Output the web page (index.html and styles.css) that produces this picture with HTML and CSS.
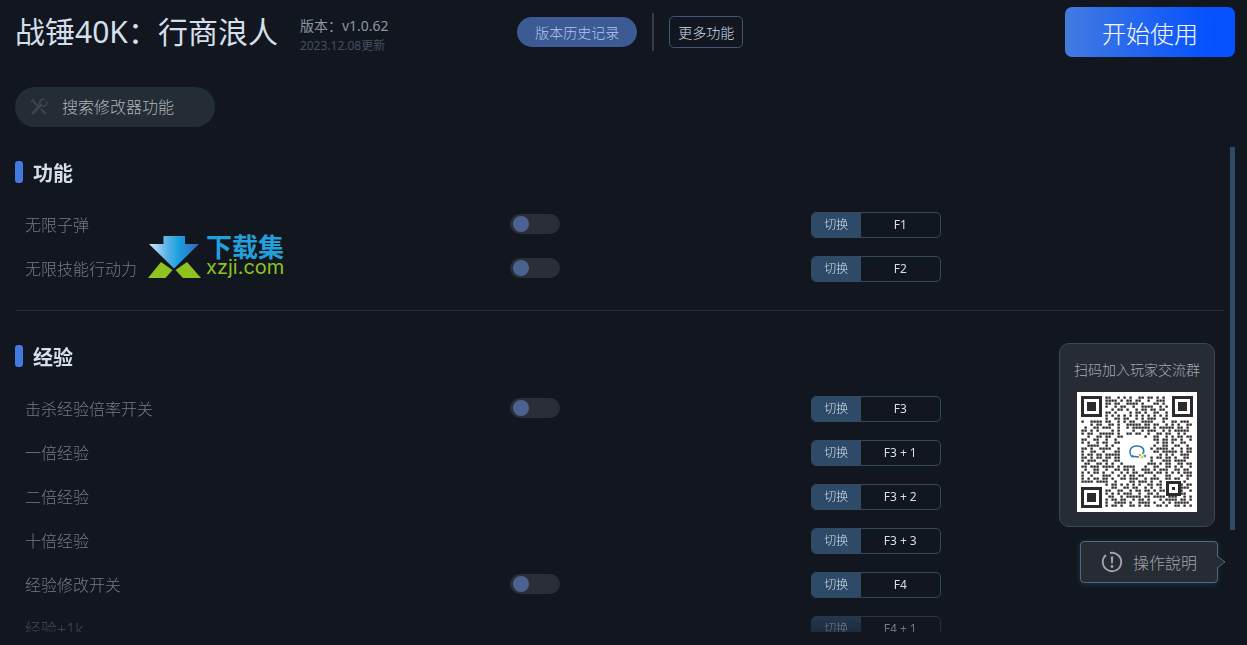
FILE: index.html
```html
<!DOCTYPE html>
<html lang="zh-CN">
<head>
    <meta charset="UTF-8">
    <meta name="viewport" content="width=device-width, initial-scale=1.0">
    <title>战锤40K：行商浪人</title>
    <link rel="stylesheet" href="styles.css">
</head>
<body>
    <header class="header">
        <div class="game">
            <h1>战锤40K：行商浪人</h1>
            <div class="version">
                <p class="version-number">版本：v1.0.62</p>
                <p class="version-date">2023.12.08更新</p>
            </div>
        </div>
        <div class="actions">
            <button type="button" class="btn-history">版本历史记录</button>
            <span class="separator"></span>
            <button type="button" class="btn-more">更多功能</button>
            <button type="button" class="btn-start">开始使用</button>
        </div>
    </header>

    <form class="search" role="search">
        <svg class="search-icon" viewBox="0 0 18 18" aria-hidden="true">
            <path d="M3 3l6.500 6.500M11 11l5 5" stroke-width="2.200"/>
            <path d="M2 16l9-9" stroke-width="2.600"/>
            <path d="M16.500 3.500a3.300 3.300 0 0 1-5.500 3.500a3.300 3.300 0 0 1 3.500-5.500" stroke-width="1.800"/>
            <path d="M1 4l3-3" stroke-width="1.600"/>
        </svg>
        <input type="text" placeholder="搜索修改器功能" aria-label="搜索修改器功能">
    </form>

    <main class="main">
        <div class="list">
            <section class="group">
                <h2>功能</h2>
                <div class="row">
                    <label for="ammo">无限子弹</label>
                    <input type="checkbox" class="switch" id="ammo">
                    <button type="button" class="hotkey"><span class="mode">切换</span><span class="key">F1</span></button>
                </div>
                <div class="row">
                    <label for="action">无限技能行动力</label>
                    <input type="checkbox" class="switch" id="action">
                    <button type="button" class="hotkey"><span class="mode">切换</span><span class="key">F2</span></button>
                </div>
            </section>

            <section class="group">
                <h2>经验</h2>
                <div class="row">
                    <label for="kill-exp">击杀经验倍率开关</label>
                    <input type="checkbox" class="switch" id="kill-exp">
                    <button type="button" class="hotkey"><span class="mode">切换</span><span class="key">F3</span></button>
                </div>
                <div class="row">
                    <span>一倍经验</span>
                    <button type="button" class="hotkey"><span class="mode">切换</span><span class="key">F3 + 1</span></button>
                </div>
                <div class="row">
                    <span>二倍经验</span>
                    <button type="button" class="hotkey"><span class="mode">切换</span><span class="key">F3 + 2</span></button>
                </div>
                <div class="row">
                    <span>十倍经验</span>
                    <button type="button" class="hotkey"><span class="mode">切换</span><span class="key">F3 + 3</span></button>
                </div>
                <div class="row">
                    <label for="edit-exp">经验修改开关</label>
                    <input type="checkbox" class="switch" id="edit-exp">
                    <button type="button" class="hotkey"><span class="mode">切换</span><span class="key">F4</span></button>
                </div>
                <div class="row">
                    <span>经验+1k</span>
                    <button type="button" class="hotkey"><span class="mode">切换</span><span class="key">F4 + 1</span></button>
                </div>
            </section>
        </div>
        <div class="scrollbar"><div class="thumb"></div></div>
    </main>

    <div class="watermark">
        <svg class="watermark-icon" viewBox="0 0 53 43" aria-hidden="true">
            <defs>
                <linearGradient id="arrow" x1="0" y1="0" x2="1" y2="0">
                    <stop offset="0" stop-color="#d5e9f8"/>
                    <stop offset="0.350" stop-color="#5bb4e5"/>
                    <stop offset="0.600" stop-color="#1a9fe0"/>
                    <stop offset="1" stop-color="#3c62b4"/>
                </linearGradient>
            </defs>
            <path d="M15.500 1h21.500v8h14L26 33.500 1 9h14.500z" fill="url(#arrow)"/>
            <path d="M13 27l11.500 8-7 8H0zM39 27l-11.500 8 7.500 8h18z" fill="#8fc31f"/>
        </svg>
        <div class="watermark-text">
            <span class="watermark-name">下载集</span>
            <span class="watermark-url">xzji.com</span>
        </div>
    </div>

    <aside class="float">
        <div class="qr-card">
            <p>扫码加入玩家交流群</p>
            <svg class="qr" viewBox="0 0 120 120" role="img" aria-label="二维码">
                <rect width="120" height="120" fill="#fff"/>
                <path id="qr-dots" fill="#2b2b2e"/>
                <path d="M5.500 5.500h18v18h-18zM96.500 5.500h18v18h-18zM5.500 96.500h18v18h-18zM90.500 90.500h12v12h-12z" fill="none" stroke="#2b2b2e" stroke-width="3"/>
                <path d="M10 10h9v9h-9zM101 10h9v9h-9zM10 101h9v9h-9zM95 95h3v3h-3z" fill="#2b2b2e"/>
                <path d="M55 65c-4-5-2-11 5-11 6 0 8 4 6 8M55 65l1-2M56 65c2-1 4 0 6 0" fill="none" stroke="#2878b8" stroke-width="1.500"/>
                <circle cx="66" cy="61" r="1.200" fill="#49b675"/>
                <circle cx="63" cy="63" r="1.200" fill="#ed9d3b"/>
                <circle cx="68" cy="64" r="1.400" fill="#4a9ed8"/>
                <circle cx="65" cy="65" r="1.600" fill="#edcf52"/>
            </svg>
        </div>
        <button type="button" class="btn-help">
            <svg class="help-icon" viewBox="0 0 22 22" aria-hidden="true">
                <path d="M5 4A9.200 9.200 0 1 0 9 2" fill="none" stroke="currentColor" stroke-width="1.800"/>
                <path d="M9.800 5.500h2.400l-.4 7h-1.600z" fill="currentColor"/>
                <circle cx="11" cy="15.500" r="1.400" fill="currentColor"/>
            </svg>
            操作說明
            <svg class="help-arrow" viewBox="0 0 9 14" aria-hidden="true">
                <path d="M0 1l8 6-8 6" fill="#262b34" stroke="#4d687f"/>
            </svg>
        </button>
    </aside>

    <script>
        const rows = [
            '........##..#.#.#..##.##.#.#.........',
            '........####.#.##.##..#..###.........',
            '........##.##..####.#...##.#.........',
            '........#..#.##..#..####..#.#........',
            '..........#.##.#..#.##.##.##.........',
            '........##.#....#.##.#..##..#........',
            '........#.#.#.#.#.#.#.#.#.#.#........',
            '........#..##.##..#.#.###..##........',
            '#..####.##..#.#.##..####...#..##.###.',
            '...#.##..##.#..#####.##.##..#.#.#..##',
            '.#..##.###..#..#.######.#.#####.##.#.',
            '##.#.#....#.#....#..#.###..#.#.#####.',
            '#.##..#####.#..##.##..#..##.##..#.#..',
            '..#..##.##..##.......#..##..#.#.##.##',
            '##..##..#..#............##.##.##.#..#',
            '#.#..#.##..##............#.##.#..##..',
            '..####..#.#.............#..##..##..#.',
            '##.#..####..#..........#.####.#..#.##',
            '#..##..#...##...........##.#####.#.##',
            '#.##.##.#####.............#.#.#..###.',
            '##.#.##.##.##..........#.##.##.#..##.',
            '#.###..##..##..........#...###.####..',
            '.##..##.#.#..#........###.#.##..##.##',
            '##.###.####.#.####...#..##..##.#.#..#',
            '.#..##..#..##.##.#..###.#.###..##.##.',
            '#.#.##.#..#..#.#.##..###.##.#.#.#.###',
            '#..#...###..#.#.##.##...#...##...#.##',
            '#.#.##.##.#..##.###..#.###..##.##..#.',
            '####.####..#....##.###.#..#.......#..',
            '........#.##.#.#.#.#..##.##......#.##',
            '..........##..##.##..#.#..#......###.',
            '........##..##..#.##.##.#.##.....#..#',
            '........#.#.#.###..#..##.#.......##..',
            '.........##..#.#####.##.####.###..#.#',
            '........#.##.##..#.##.#...#.####.##.#',
            '........#..####.#..####.#..#.#.#####.',
            '........#.##.#..##.#.##..##.#..##.#.#'
        ];

        let dots = '';
        rows.forEach((row, y) => {
            [...row].forEach((cell, x) => {
                if (cell === '#') {
                    dots += `M${x * 3 + 4.4} ${y * 3 + 4.4}h2.4v2.4h-2.4z`;
                }
            });
        });
        document.getElementById('qr-dots').setAttribute('d', dots);

        document.querySelector('.search').addEventListener('submit', event => {
            event.preventDefault();
        });
    </script>
</body>
</html>
```
FILE: styles.css
```css
* {
    box-sizing: border-box;
}

body {
    display: flex;
    flex-direction: column;
    position: relative;
    height: 100vh;
    margin: 0;
    padding: 0 12px 13px 15px;
    overflow: hidden;
    background-color: #12171f;
    color: #d5dfec;
    font-family: "Noto Sans", "Noto Sans CJK SC", sans-serif;
    font-weight: 300;
}

h1, h2, p {
    margin: 0;
}

button, input {
    font-family: inherit;
    font-weight: inherit;
}

button {
    padding: 0;
    cursor: pointer;
}

.header {
    display: grid;
    grid-template-columns: 7fr 10fr;
    align-items: center;
    height: 64px;
}

.game {
    display: flex;
    align-items: center;
    gap: 22px;
    white-space: nowrap;
}

h1 {
    font-size: 30px;
    font-weight: 400;
    line-height: 44px;
}

.version {
    padding-top: 8px;
    font-weight: 400;
    line-height: 20px;
}

.version-number {
    color: #8d95a1;
    font-size: 14px;
}

.version-date {
    color: #454e60;
    font-size: 12px;
}

.actions {
    display: flex;
    align-items: center;
    gap: 15px;
}

.btn-history {
    width: 120px;
    height: 30px;
    border: none;
    border-radius: 15px;
    background-color: #3c5a93;
    color: #b4c8ed;
    font-size: 14px;
}

.separator {
    width: 2px;
    height: 38px;
    background-color: #343b47;
}

.btn-more {
    width: 74px;
    height: 32px;
    border: 1px solid #3f5678;
    border-radius: 5px;
    background-color: transparent;
    color: #d0dced;
    font-size: 14px;
}

.btn-start {
    width: 170px;
    height: 50px;
    margin-left: auto;
    border: none;
    border-radius: 7px;
    background: linear-gradient(to right, #437be0, #0551ff 85%);
    color: #fff;
    font-size: 24px;
}

.search {
    display: flex;
    flex-shrink: 0;
    align-items: center;
    gap: 14px;
    width: 200px;
    height: 40px;
    margin: 23px 0 20px;
    padding: 0 15px;
    border-radius: 20px;
    background-color: #242c35;
}

.search-icon {
    flex-shrink: 0;
    width: 18px;
    height: 18px;
    fill: none;
    stroke: #3b434d;
}

.search input {
    width: 100%;
    min-width: 0;
    padding: 0;
    border: none;
    outline: none;
    background: transparent;
    color: #d5dfec;
    font-size: 16px;
}

.search input::placeholder {
    color: #b0b4b9;
}

.main {
    display: flex;
    flex: 1;
    gap: 6px;
    min-height: 0;
}

.list {
    flex: 1;
    overflow: hidden;
    mask-image: linear-gradient(to top, rgba(0, 0, 0, 0.4), #000 36px);
}

.group {
    padding-bottom: 20px;
    border-bottom: 1px solid #222932;
    margin-bottom: 20px;
}

h2 {
    display: flex;
    align-items: center;
    gap: 10px;
    height: 50px;
    margin-bottom: 5px;
    font-size: 20px;
    font-weight: 700;
}

h2::before {
    content: "";
    width: 8px;
    height: 22px;
    border-radius: 3px;
    background-color: #4478e3;
}

.row {
    display: grid;
    grid-template-columns: 202fr 125fr 172fr;
    align-items: center;
    height: 44px;
    padding-left: 10px;
    color: #747a83;
    font-size: 16px;
}

.switch {
    appearance: none;
    width: 50px;
    height: 20px;
    margin: 0;
    padding: 2px 3px;
    border-radius: 10px;
    background-color: #292e37;
    cursor: pointer;
}

.switch::before {
    content: "";
    display: block;
    width: 16px;
    height: 16px;
    border-radius: 50%;
    background-color: #4b6290;
}

.switch:checked::before {
    margin-left: auto;
    background-color: #4478e3;
}

.hotkey {
    display: flex;
    grid-column: 3;
    width: 130px;
    height: 26px;
    margin-top: 2px;
    border: 1px solid #34495c;
    border-radius: 5px;
    overflow: hidden;
    background-color: transparent;
    color: #d5dfec;
    font-size: 12px;
    line-height: 24px;
}

.mode {
    width: 49px;
    background-color: #2d4b68;
    color: #d5dfec;
}

.key {
    flex: 1;
    font-weight: 400;
}

.scrollbar {
    width: 5px;
}

.thumb {
    height: 79%;
    background-color: #2d4a66;
}

.watermark {
    display: flex;
    position: absolute;
    top: 235px;
    left: 148px;
    gap: 5px;
    pointer-events: none;
}

.watermark-icon {
    width: 53px;
    height: 43px;
}

.watermark-text {
    display: flex;
    flex-direction: column;
}

.watermark-name {
    color: #239fdb;
    font-size: 26px;
    font-weight: 700;
    line-height: 24px;
}

.watermark-url {
    color: #8fc31f;
    font-family: Inter, sans-serif;
    font-size: 20px;
    font-weight: 400;
    line-height: 16px;
}

.float {
    display: flex;
    flex-direction: column;
    align-items: flex-end;
    position: absolute;
    right: 29px;
    bottom: 62px;
    gap: 14px;
}

.qr-card {
    display: flex;
    flex-direction: column;
    align-items: center;
    gap: 12px;
    margin-right: 3px;
    padding: 15px 14px 14px;
    border: 1px solid #34495c;
    border-radius: 10px;
    background-color: #262b34;
    color: #a8adb5;
    font-size: 14px;
    line-height: 21px;
}

.qr {
    width: 120px;
    height: 120px;
}

.btn-help {
    display: flex;
    align-items: center;
    justify-content: center;
    gap: 10px;
    position: relative;
    width: 138px;
    height: 42px;
    border: 1px solid #4d687f;
    border-radius: 4px;
    background-color: #262b34;
    box-shadow: 0 1px 5px rgba(50, 100, 130, 0.4);
    color: #a2a5ab;
    font-size: 16px;
}

.help-icon {
    width: 22px;
    height: 22px;
}

.help-arrow {
    position: absolute;
    left: 100%;
    width: 9px;
    height: 14px;
}
```
